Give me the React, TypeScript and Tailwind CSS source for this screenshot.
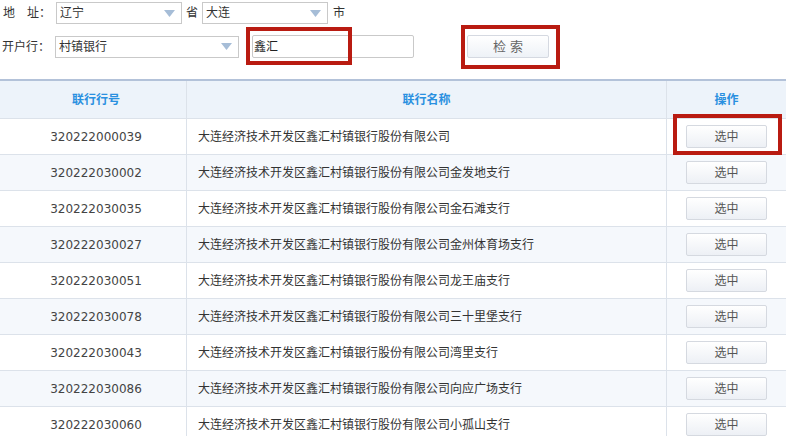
import React from 'react';

const rows: [string, string][] = [
  ['320222000039', '大连经济技术开发区鑫汇村镇银行股份有限公司'],
  ['320222030002', '大连经济技术开发区鑫汇村镇银行股份有限公司金发地支行'],
  ['320222030035', '大连经济技术开发区鑫汇村镇银行股份有限公司金石滩支行'],
  ['320222030027', '大连经济技术开发区鑫汇村镇银行股份有限公司金州体育场支行'],
  ['320222030051', '大连经济技术开发区鑫汇村镇银行股份有限公司龙王庙支行'],
  ['320222030078', '大连经济技术开发区鑫汇村镇银行股份有限公司三十里堡支行'],
  ['320222030043', '大连经济技术开发区鑫汇村镇银行股份有限公司湾里支行'],
  ['320222030086', '大连经济技术开发区鑫汇村镇银行股份有限公司向应广场支行'],
  ['320222030060', '大连经济技术开发区鑫汇村镇银行股份有限公司小孤山支行'],
];

function Select({ value, width }: { value: string; width: string }) {
  return (
    <div className={`${width} h-[22px] border border-[#c9c9c9] bg-white flex items-center justify-between pl-[3px] pr-[6px]`}>
      <span>{value}</span>
      <svg width="11" height="7" viewBox="0 0 11 7">
        <path d="M0 0 L11 0 L5.5 7 Z" fill="#a6bdd7" />
      </svg>
    </div>
  );
}

export default function App() {
  return (
    <div
      className="relative w-[786px] h-[436px] overflow-hidden bg-white text-[12px] text-[#333]"
      style={{ fontFamily: '"DejaVu Sans", "Noto Sans CJK SC", sans-serif' }}
    >
      {/* Search form */}
      <div className="flex items-center h-[22px] mt-[2px]">
        <span className="ml-[3px] w-[53px]">地　址：</span>
        <Select value="辽宁" width="w-[126px]" />
        <span className="mx-[4px]">省</span>
        <Select value="大连" width="w-[126px]" />
        <span className="ml-[5px]">市</span>
      </div>
      <div className="flex items-center h-[23px] mt-[11px]">
        <span className="ml-[2px] w-[53px]">开户行：</span>
        <Select value="村镇银行" width="w-[184px]" />
        <div className="ml-[13px] w-[162px] h-[23px] border border-[#c9c9c9] rounded-[2px] flex items-center pl-[1px] text-[#222]">
          鑫汇
        </div>
        <button className="ml-[53px] w-[82px] h-[23px] border border-[#d5d9e1] rounded-[2px] bg-gradient-to-b from-white to-[#eef2f7] text-[13px] text-[#666]">
          检 索
        </button>
      </div>

      {/* Result table */}
      <div className="mt-[21px] border-t-2 border-[#b3c2d9]">
        <div className="grid grid-cols-[187px_480px_1fr] h-[38px] bg-[#edf3fa] border-b border-[#dce2ea] font-bold text-[#2a90e0]">
          <div className="flex items-center justify-center border-r border-[#dce2ea] pl-[6px]">联行行号</div>
          <div className="flex items-center justify-center border-r border-[#dce2ea]">联行名称</div>
          <div className="flex items-center justify-center">操作</div>
        </div>
        {rows.map(([code, name], i) => (
          <div
            key={code}
            className={`grid grid-cols-[187px_480px_1fr] h-[36px] border-b border-[#dce2ea] ${i % 2 === 1 ? 'bg-[#f5f8fc]' : 'bg-white'}`}
          >
            <div className="flex items-center justify-center border-r border-[#dce2ea] pl-[6px] text-[#444]">{code}</div>
            <div className="flex items-center pl-[11px] border-r border-[#dce2ea]">{name}</div>
            <div className="flex items-center justify-center">
              <button className="w-[81px] h-[23px] border border-[#d5d9e0] rounded-[2px] bg-gradient-to-b from-white to-[#edf0f5] text-[#555]">
                选中
              </button>
            </div>
          </div>
        ))}
      </div>

      {/* Red highlight annotations */}
      <div className="absolute left-[246px] top-[27px] w-[106px] h-[38px] border-4 border-[#b91b11]" />
      <div className="absolute left-[461px] top-[25px] w-[99px] h-[44px] border-4 border-[#b91b11]" />
      <div className="absolute left-[673px] top-[114px] w-[109px] h-[41px] border-4 border-[#b91b11]" />
    </div>
  );
}
